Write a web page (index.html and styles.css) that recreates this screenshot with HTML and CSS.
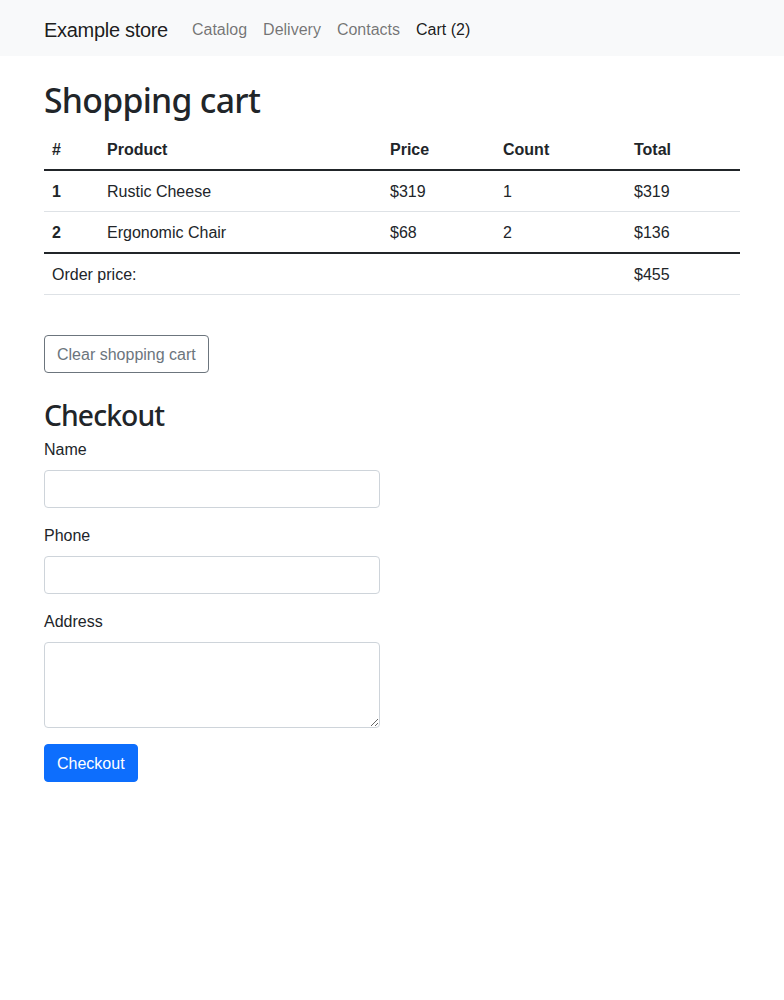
FILE: index.html
```html
<!DOCTYPE html>
<html lang="en">
<head>
<meta charset="utf-8">
<title>Example store</title>
<link rel="stylesheet" href="styles.css">
</head>
<body>
<nav class="navbar">
  <div class="container nav-inner">
    <a class="brand" href="#">Example store</a>
    <ul class="nav-links">
      <li><a class="nav-link" href="#">Catalog</a></li>
      <li><a class="nav-link" href="#">Delivery</a></li>
      <li><a class="nav-link" href="#">Contacts</a></li>
      <li><a class="nav-link active" href="#">Cart (2)</a></li>
    </ul>
  </div>
</nav>
<main class="container main">
  <h1 class="title">Shopping cart</h1>
  <table class="cart">
    <colgroup>
      <col class="c-num"><col class="c-prod"><col class="c-price"><col class="c-count"><col class="c-total">
    </colgroup>
    <thead>
      <tr><th>#</th><th>Product</th><th>Price</th><th>Count</th><th>Total</th></tr>
    </thead>
    <tbody>
      <tr><th>1</th><td>Rustic Cheese</td><td>$319</td><td>1</td><td>$319</td></tr>
      <tr><th>2</th><td>Ergonomic Chair</td><td>$68</td><td>2</td><td>$136</td></tr>
    </tbody>
    <tfoot>
      <tr><td colspan="4">Order price:</td><td>$455</td></tr>
    </tfoot>
  </table>
  <div class="clear-wrap">
    <button class="btn btn-outline" type="button">Clear shopping cart</button>
  </div>
  <h2 class="subtitle">Checkout</h2>
  <form class="checkout">
    <div class="field">
      <label class="label" for="name">Name</label>
      <input class="control" id="name" type="text">
    </div>
    <div class="field">
      <label class="label" for="phone">Phone</label>
      <input class="control" id="phone" type="text">
    </div>
    <div class="field">
      <label class="label" for="address">Address</label>
      <textarea class="control area" id="address" rows="3"></textarea>
    </div>
    <button class="btn btn-primary" type="submit">Checkout</button>
  </form>
</main>
</body>
</html>
```
FILE: styles.css
```css
* { box-sizing: border-box; }
body {
  margin: 0;
  font-family: "Liberation Sans", Arial, sans-serif;
  font-size: 16px;
  line-height: 1.5;
  color: #212529;
  background: #fff;
}
.container {
  width: 720px;
  margin: 0 auto;
  padding: 0 12px;
}
.navbar {
  background: #f8f9fa;
  padding: 8px 0;
}
.nav-inner {
  display: flex;
  align-items: center;
}
.brand {
  font-size: 20px;
  line-height: 30px;
  padding: 7px 0 3px;
  margin-right: 16px;
  color: rgba(0,0,0,.9);
  text-decoration: none;
  letter-spacing: -0.3px;
}
.nav-links {
  display: flex;
  list-style: none;
  margin: 0;
  padding: 0;
}
.nav-link {
  display: block;
  padding: 10px 8px 6px;
  color: rgba(0,0,0,.55);
  text-decoration: none;
}
.nav-link.active { color: rgba(0,0,0,.9); }
.main { padding-top: 24px; }
.title {
  margin: 0 0 8px;
  padding-top: 1px;
  margin-top: -1px;
  font-family: "Noto Sans", "Liberation Sans", sans-serif;
  font-size: 33.76px;
  font-weight: 500;
  line-height: 1.2;
  letter-spacing: -0.7px;
}
.cart {
  width: 100%;
  border-collapse: collapse;
  table-layout: fixed;
  margin-bottom: 16px;
}
.c-num { width: 55px; }
.c-prod { width: 283px; }
.c-price { width: 113px; }
.c-count { width: 131px; }
.c-total { width: 114px; }
.cart th, .cart td {
  padding: 9px 8px 7px;
  text-align: left;
  border-bottom: 1px solid #dee2e6;
}
.cart th { font-weight: bold; }
.cart tbody, .cart tfoot { border-top: 2px solid #212529; }
.clear-wrap { padding-top: 24px; margin-bottom: 24px; }
.btn {
  display: inline-block;
  font-family: inherit;
  font-size: 16px;
  line-height: 24px;
  padding: 7px 12px 5px;
  border-radius: 4px;
  border: 1px solid transparent;
  cursor: pointer;
}
.btn-outline {
  background: transparent;
  color: #6c757d;
  border-color: #6c757d;
}
.btn-primary {
  background: #0d6efd;
  border-color: #0d6efd;
  color: #fff;
}
.subtitle {
  margin: 0 0 6px;
  padding-top: 2px;
  font-family: "Noto Sans", "Liberation Sans", sans-serif;
  font-size: 28.26px;
  font-weight: 500;
  line-height: 1.2;
  letter-spacing: -0.9px;
}
.checkout { width: 336px; }
.field { margin-bottom: 16px; }
.label {
  display: block;
  margin-bottom: 8px;
  padding-top: 1px;
  margin-top: -1px;
}
.control {
  display: block;
  width: 100%;
  height: 38px;
  padding: 6px 12px;
  font-family: inherit;
  font-size: 16px;
  line-height: 24px;
  color: #212529;
  background: #fff;
  border: 1px solid #ced4da;
  border-radius: 4px;
  margin: 0;
}
.area {
  height: 86px;
  resize: vertical;
}
```
